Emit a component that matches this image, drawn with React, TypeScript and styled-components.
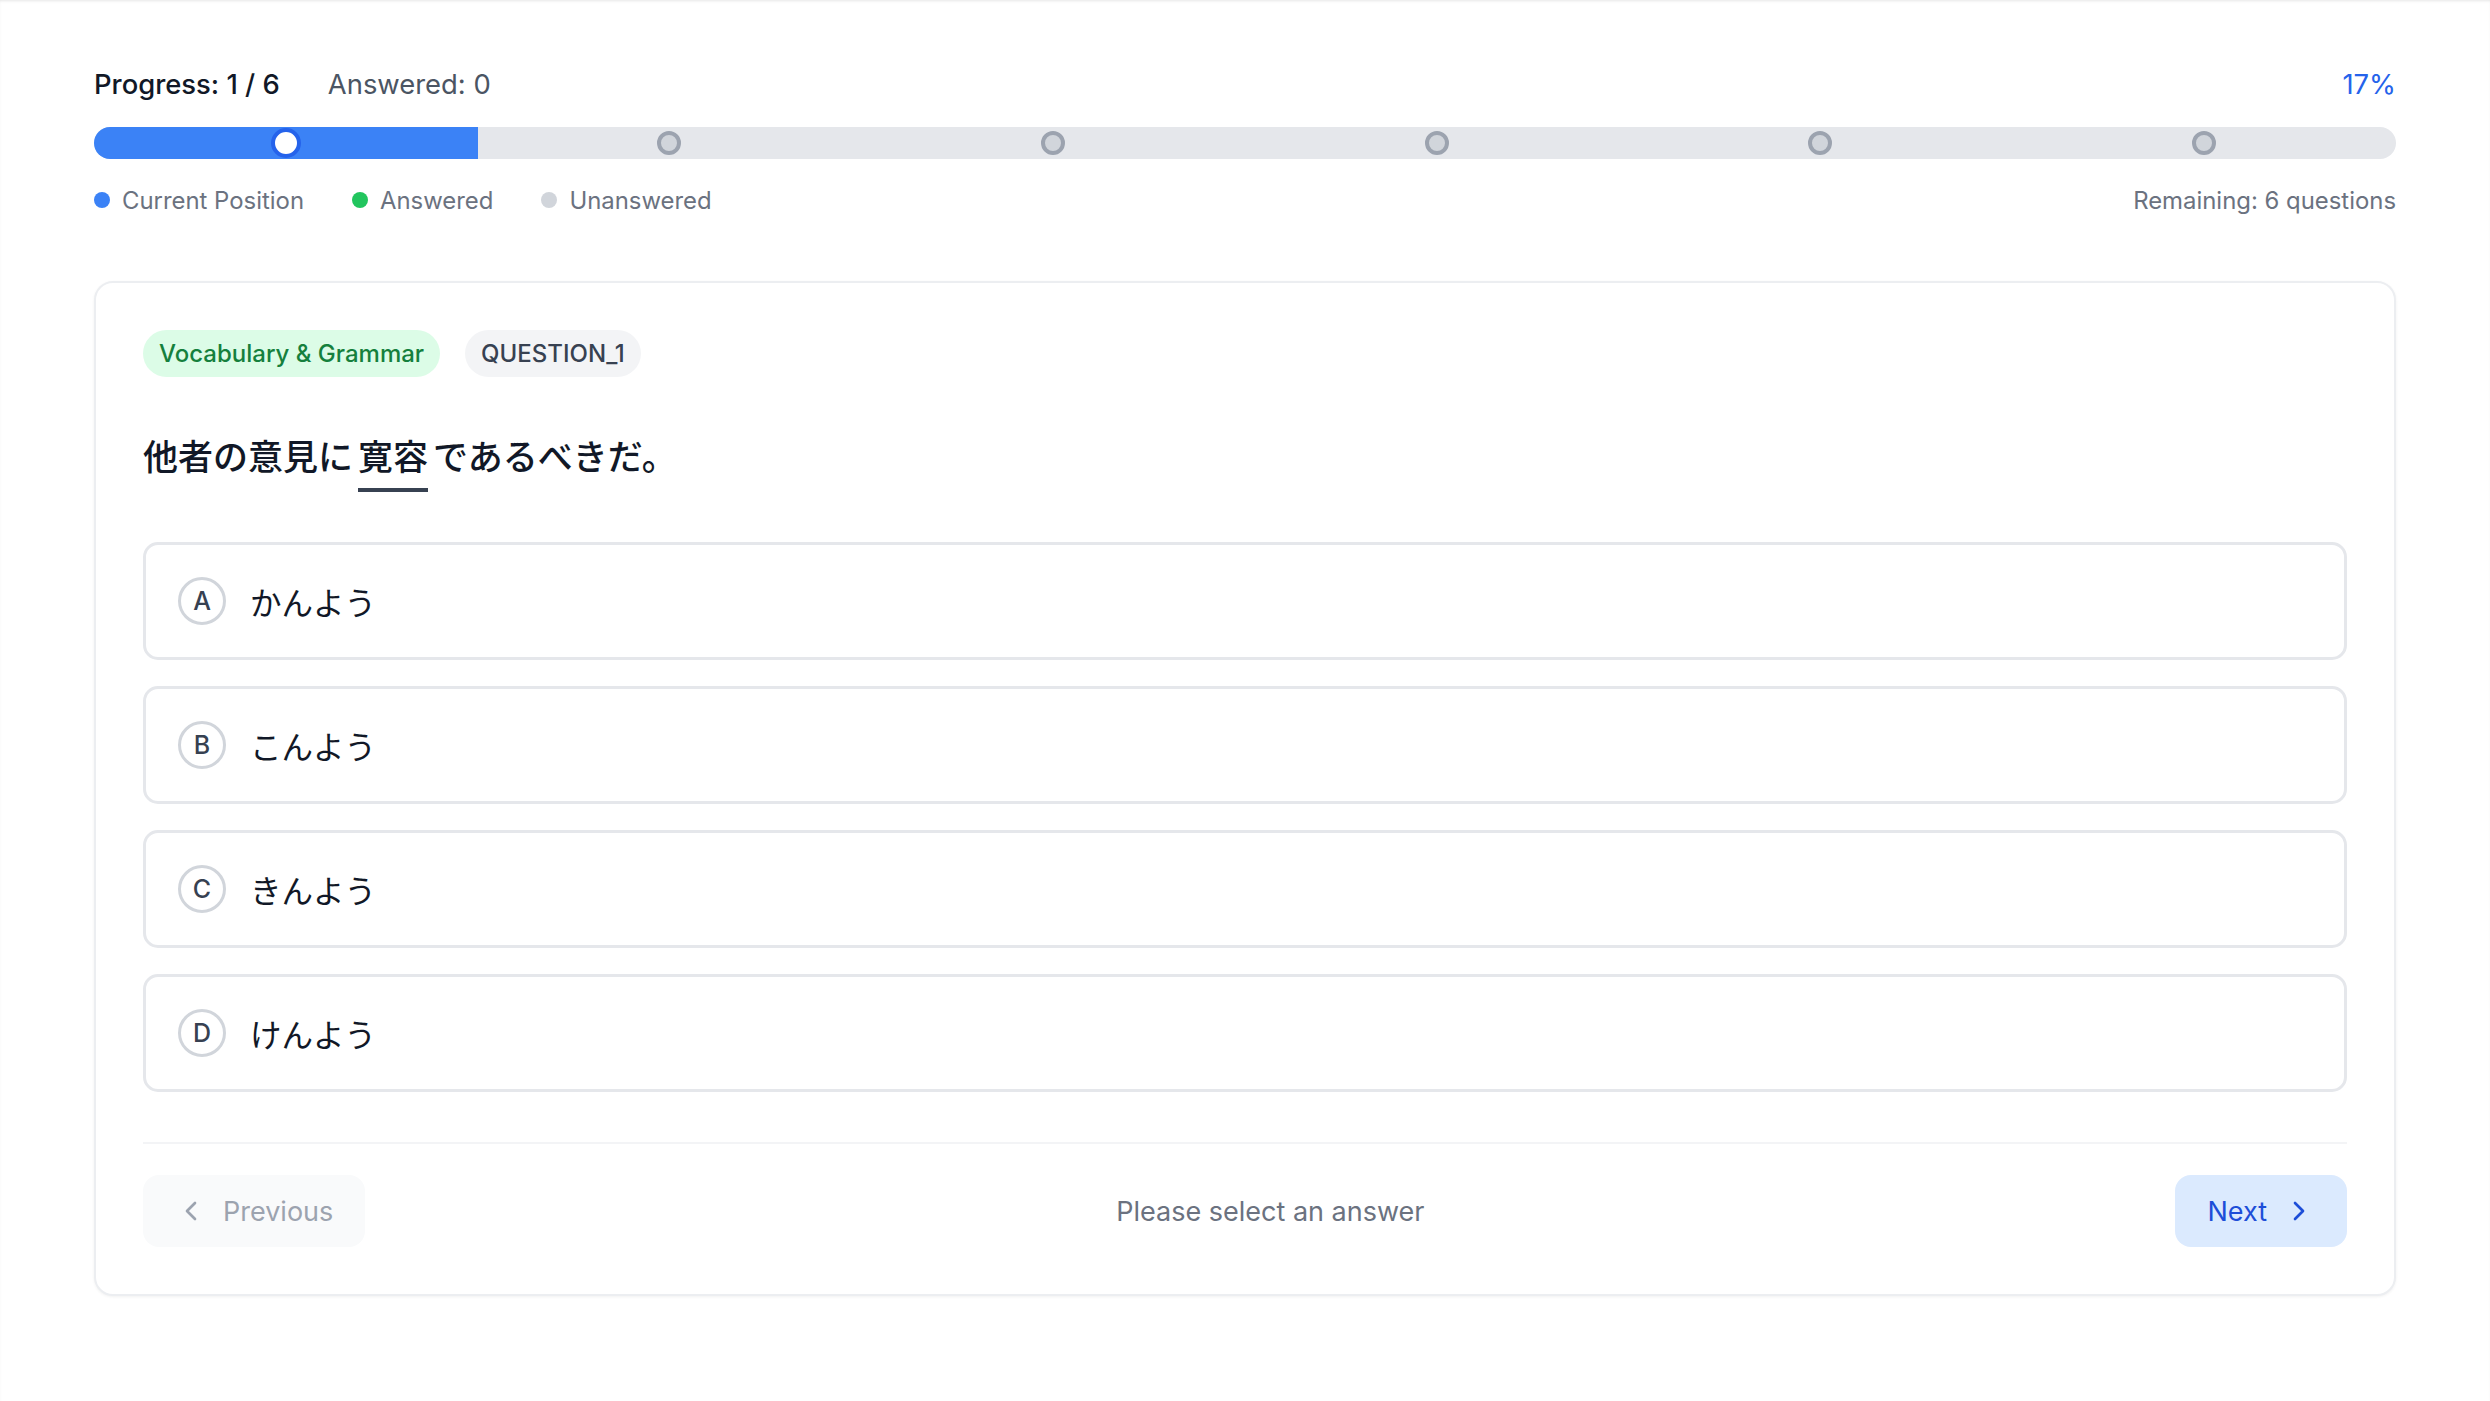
import styled, { createGlobalStyle } from "styled-components";
import { ChevronLeft, ChevronRight } from "lucide-react";

const GlobalStyle = createGlobalStyle`
    body {
        margin: 0;
        background: #ffffff;
        font-family: Inter, "Noto Sans CJK JP", sans-serif;
        color: #111827;
    }
    * {
        box-sizing: border-box;
    }
`;

const TOTAL = 6;
const CURRENT = 0;

const options = [
    { key: "A", text: "かんよう" },
    { key: "B", text: "こんよう" },
    { key: "C", text: "きんよう" },
    { key: "D", text: "けんよう" },
];

const App = () => {
    const percent = Math.round(((CURRENT + 1) / TOTAL) * 100);

    return (
        <>
            <GlobalStyle />
            <Page>
                <ProgressHeader>
                    <Stats>
                        <StatText $strong>Progress: 1 / 6</StatText>
                        <StatText>Answered: 0</StatText>
                    </Stats>
                    <Percent>{percent}%</Percent>
                </ProgressHeader>

                <Track>
                    <Fill style={{ width: `${((CURRENT + 1) / TOTAL) * 100}%` }} />
                    <Markers>
                        {Array.from({ length: TOTAL }).map((_, i) => (
                            <Marker key={i} $current={i === CURRENT} />
                        ))}
                    </Markers>
                </Track>

                <Legend>
                    <LegendItems>
                        <LegendItem>
                            <LegendDot $color="#3b82f6" />
                            Current Position
                        </LegendItem>
                        <LegendItem>
                            <LegendDot $color="#22c55e" />
                            Answered
                        </LegendItem>
                        <LegendItem>
                            <LegendDot $color="#d1d5db" />
                            Unanswered
                        </LegendItem>
                    </LegendItems>
                    <span>Remaining: 6 questions</span>
                </Legend>

                <Card>
                    <Tags>
                        <Tag $variant="green">Vocabulary &amp; Grammar</Tag>
                        <Tag $variant="gray">QUESTION_1</Tag>
                    </Tags>

                    <Question>
                        他者の意見に<Underlined>寛容</Underlined>であるべきだ。
                    </Question>

                    <Options>
                        {options.map((o) => (
                            <Option key={o.key}>
                                <OptionLetter>{o.key}</OptionLetter>
                                <OptionText>{o.text}</OptionText>
                            </Option>
                        ))}
                    </Options>

                    <Footer>
                        <NavButton>
                            <ChevronLeft size={32} strokeWidth={2} />
                            Previous
                        </NavButton>
                        <Hint>Please select an answer</Hint>
                        <NavButton $primary>
                            Next
                            <ChevronRight size={32} strokeWidth={2} />
                        </NavButton>
                    </Footer>
                </Card>
            </Page>
        </>
    );
};

const Page = styled.div`
    min-height: 1401px;
    padding: 65px 94px 0;
    box-shadow: inset 0 2px 3px -1px rgba(0, 0, 0, 0.1);
`;

const ProgressHeader = styled.div`
    display: flex;
    justify-content: space-between;
    align-items: center;
    height: 38px;
    margin-bottom: 24px;
`;

const Stats = styled.div`
    display: flex;
    align-items: center;
    gap: 48px;
`;

const StatText = styled.span<{ $strong?: boolean }>`
    font-size: 27.4px;
    font-weight: ${(p) => (p.$strong ? 500 : 400)};
    color: ${(p) => (p.$strong ? "#111827" : "#4b5563")};
`;

const Percent = styled.span`
    font-size: 27.4px;
    color: #2563eb;
`;

const Track = styled.div`
    position: relative;
    height: 32px;
    border-radius: 16px;
    background: #e5e7eb;
`;

const Fill = styled.div`
    position: absolute;
    left: 0;
    top: 0;
    bottom: 0;
    background: #3b82f6;
    border-radius: 16px 0 0 16px;
`;

const Markers = styled.div`
    position: absolute;
    inset: 0;
    display: grid;
    grid-template-columns: repeat(6, 1fr);
    align-items: center;
    justify-items: center;
`;

const Marker = styled.div<{ $current?: boolean }>`
    width: ${(p) => (p.$current ? "30px" : "24px")};
    height: ${(p) => (p.$current ? "30px" : "24px")};
    border-radius: 50%;
    border: 4px solid ${(p) => (p.$current ? "#2563eb" : "#9ca3af")};
    background: ${(p) => (p.$current ? "#ffffff" : "#d1d5db")};
`;

const Legend = styled.div`
    margin-top: 25px;
    height: 32px;
    display: flex;
    justify-content: space-between;
    align-items: center;
    font-size: 23.9px;
    color: #6b7280;
`;

const LegendItems = styled.div`
    display: flex;
    align-items: center;
    gap: 48px;
`;

const LegendItem = styled.div`
    display: flex;
    align-items: center;
    gap: 12px;
`;

const LegendDot = styled.span<{ $color: string }>`
    width: 16px;
    height: 16px;
    border-radius: 50%;
    background: ${(p) => p.$color};
`;

const Card = styled.div`
    margin-top: 65px;
    border: 2px solid #eceef1;
    border-radius: 19px;
    padding: 47px;
    background: #ffffff;
    box-shadow: 0 1px 3px rgba(0, 0, 0, 0.06);
`;

const Tags = styled.div`
    display: flex;
    align-items: center;
    gap: 25px;
`;

const Tag = styled.span<{ $variant: "green" | "gray" }>`
    display: inline-flex;
    align-items: center;
    height: 47px;
    padding: 0 16px;
    border-radius: 999px;
    font-size: 24px;
    font-weight: 500;
    background: ${(p) => (p.$variant === "green" ? "#dcfce7" : "#f3f4f6")};
    color: ${(p) => (p.$variant === "green" ? "#15803d" : "#374151")};
`;

const Question = styled.div`
    margin-top: 54px;
    font-size: 35px;
    line-height: 52px;
    font-weight: 500;
    color: #111827;
`;

const Underlined = styled.span`
    display: inline-block;
    margin: 0 5px;
    padding-bottom: 5px;
    border-bottom: 4px solid #374151;
`;

const Options = styled.div`
    margin-top: 50px;
    display: flex;
    flex-direction: column;
    gap: 26px;
`;

const Option = styled.div`
    display: flex;
    align-items: center;
    gap: 24px;
    padding: 32px;
    border: 3px solid #e5e7eb;
    border-radius: 15px;
    background: #ffffff;
`;

const OptionLetter = styled.span`
    width: 48px;
    height: 48px;
    border-radius: 50%;
    border: 3px solid #d1d5db;
    display: flex;
    justify-content: center;
    align-items: center;
    font-size: 25px;
    font-weight: 500;
    color: #374151;
`;

const OptionText = styled.span`
    font-size: 31.5px;
    color: #111827;
`;

const Footer = styled.div`
    margin-top: 50px;
    border-top: 2px solid #f3f4f6;
    padding-top: 31px;
    display: flex;
    justify-content: space-between;
    align-items: center;
`;

const NavButton = styled.button<{ $primary?: boolean }>`
    height: 72px;
    padding: 0 32px;
    display: flex;
    align-items: center;
    gap: 16px;
    border: none;
    border-radius: 16px;
    font-family: inherit;
    font-size: 27px;
    background: ${(p) => (p.$primary ? "#dbeafe" : "#f9fafb")};
    color: ${(p) => (p.$primary ? "#1d4ed8" : "#9ca3af")};
`;

const Hint = styled.span`
    font-size: 27px;
    color: #6b7280;
`;

export default App;
